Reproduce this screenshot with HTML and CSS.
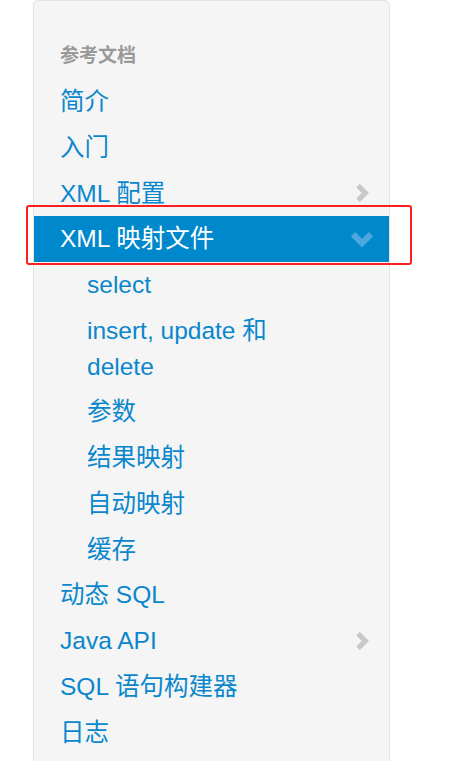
FILE: index.html
```html
<!DOCTYPE html>
<html lang="zh">
<head>
<meta charset="utf-8">
<link rel="stylesheet" href="styles.css">
</head>
<body>
<div class="well">
  <ul class="nav">
    <li class="nav-header">参考文档</li>
    <li><a href="#">简介</a></li>
    <li><a href="#">入门</a></li>
    <li><a href="#" class="has-sub">XML 配置<svg class="chev" viewBox="0 0 16 16"><polyline points="4.5,1.5 11,8 4.5,14.5"/></svg></a></li>
    <li class="active"><a href="#" class="has-sub">XML 映射文件<svg class="chev down" viewBox="0 0 16 16"><polyline points="1.5,4.5 8,11 14.5,4.5"/></svg></a>
      <ul class="sub">
        <li><a href="#">select</a></li>
        <li><a href="#">insert, update 和 delete</a></li>
        <li><a href="#">参数</a></li>
        <li><a href="#">结果映射</a></li>
        <li><a href="#">自动映射</a></li>
        <li><a href="#">缓存</a></li>
      </ul>
    </li>
    <li><a href="#">动态 SQL</a></li>
    <li><a href="#" class="has-sub">Java API<svg class="chev" viewBox="0 0 16 16"><polyline points="4.5,1.5 11,8 4.5,14.5"/></svg></a></li>
    <li><a href="#">SQL 语句构建器</a></li>
    <li><a href="#">日志</a></li>
  </ul>
</div>
<div class="highlight"></div>
</body>
</html>
```

FILE: styles.css
```css
html, body {
  margin: 0;
  padding: 0;
  background: #ffffff;
  overflow: hidden;
}
body {
  width: 449px;
  height: 761px;
  position: relative;
  font-family: "Liberation Sans", Arial, "Noto Sans CJK SC", sans-serif;
}
.well {
  margin-left: 33px;
  width: 355px;
  height: 800px;
  background: #f5f5f5;
  border: 1px solid #e3e3e3;
  border-radius: 5px;
  box-sizing: content-box;
  padding-top: 32px;
}
.nav, .sub {
  list-style: none;
  margin: 0;
  padding: 0;
}
.nav-header {
  font-size: 19px;
  font-weight: bold;
  color: #999999;
  line-height: 36px;
  padding: 5px 26px;
}
.nav a {
  display: flex;
  align-items: center;
  justify-content: space-between;
  font-size: 24.5px;
  line-height: 35.75px;
  padding: 5px 26px;
  color: #0a87cc;
  text-decoration: none;
}
.sub a {
  padding-left: 53px;
  padding-right: 110px;
}
.active > a {
  background: #0088cc;
  color: #ffffff;
}
.chev {
  width: 18px;
  height: 18px;
  flex: none;
  margin-right: -8px;
  fill: none;
  stroke: #c8c8c8;
  stroke-width: 4.5;
  stroke-linecap: butt;
  stroke-linejoin: miter;
}
.chev.down {
  stroke: #4ea8de;
  width: 22px;
  height: 22px;
  margin-right: -10px;
}
.highlight {
  position: absolute;
  left: 26px;
  top: 205px;
  width: 382px;
  height: 56px;
  border: 2px solid #ff1f1f;
  border-radius: 3px;
}
```
